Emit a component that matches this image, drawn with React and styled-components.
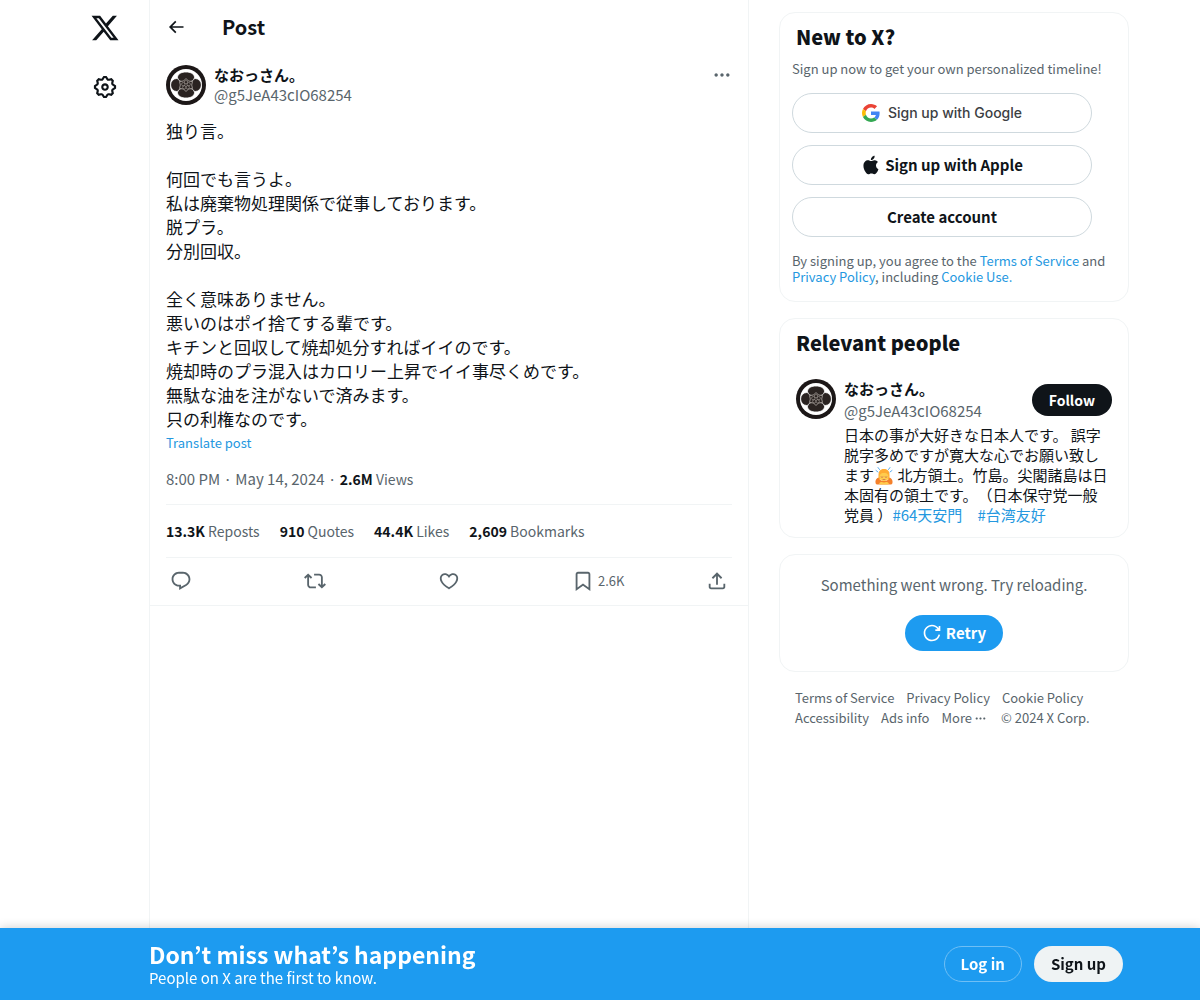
import React from "react";
import styled, { createGlobalStyle } from "styled-components";

const GlobalStyle = createGlobalStyle`
  :root {
    --text: #0f1419;
    --muted: #59656c;
    --line: #f1f4f5;
    --line-dark: #cfd9de;
    --blue: #1d9bf0;
    --link: #2498df;
  }

  *,
  *::before,
  *::after {
    box-sizing: border-box;
  }

  body {
    margin: 0;
    background-color: #fff;
    color: var(--text);
    font-family: "Noto Sans CJK JP", "Liberation Sans", sans-serif;
    font-size: 15px;
    line-height: 20px;
  }

  h1, h2, p, ul {
    margin: 0;
    padding: 0;
  }

  ul {
    list-style: none;
  }

  a {
    color: inherit;
    text-decoration: none;
  }

  button {
    padding: 0;
    border: 0;
    background: none;
    color: inherit;
    font: inherit;
    cursor: pointer;
  }
`;

const Page = styled.div`
  display: flex;
  max-width: 1078px;
  min-height: 100vh;
  margin-inline: auto;
`;

const SideNav = styled.nav`
  display: flex;
  flex-direction: column;
  align-items: center;
  gap: 31px;
  flex: 0 0 88px;
  padding-top: 13px;
`;

const NavLink = styled.a`
  display: flex;
  color: var(--text);
`;

const Column = styled.main`
  flex: 1 1 600px;
  max-width: 600px;
  border-inline: 1px solid var(--line);
`;

const TopBar = styled.header`
  display: flex;
  align-items: center;
  gap: 36px;
  height: 53px;
  padding-inline: 16px;

  & h1 {
    font-size: 20px;
    line-height: 24px;
  }
`;

const IconButton = styled.button`
  display: flex;
  align-items: center;
  gap: 4px;
  color: ${({ $color }) => $color || "var(--muted)"};
  font-size: 13px;
`;

const Post = styled.article`
  padding: 12px 16px 0;
  border-bottom: 1px solid var(--line);
`;

const PostHead = styled.div`
  display: flex;
  align-items: flex-start;
  gap: 8px;
`;

const Names = styled.div`
  display: flex;
  flex-direction: column;
  gap: ${({ $gap }) => $gap || "0"};
  flex: 1;
  min-width: 0;

  & .name {
    font-weight: 700;
  }
  & .handle {
    color: var(--muted);
  }
`;

const PostText = styled.p`
  margin-top: 14px;
  font-size: 17px;
  line-height: 24px;
  white-space: pre-line;
`;

const Translate = styled.button`
  display: block;
  color: var(--link);
  font-size: 13px;
  line-height: 24px;
`;

const Meta = styled.p`
  padding-block: 14px 15px;
  color: var(--muted);

  & span {
    font-size: 14px;
  }
  & b {
    color: var(--text);
  }
`;

const Stats = styled.ul`
  display: flex;
  flex-wrap: wrap;
  gap: 20px;
  padding-block: 16px;
  border-block: 1px solid var(--line);
  color: var(--muted);
  font-size: 14px;

  & b {
    color: var(--text);
  }
`;

const Actions = styled.div`
  display: flex;
  align-items: center;
  height: 47px;
  padding: 0 4px 2px;

  & button:not(:last-child) {
    flex: 1;
  }
`;

const Sidebar = styled.aside`
  display: flex;
  flex-direction: column;
  gap: 16px;
  flex: 0 0 350px;
  margin-left: 30px;
  padding-block: 12px 96px;
`;

const Card = styled.section`
  padding: ${({ $pad }) => $pad || "12px"};
  border: 1px solid var(--line);
  border-radius: 16px;

  & h2 {
    font-size: 20px;
    font-weight: 800;
    line-height: 24px;
  }
`;

const SignUpTitle = styled.h2`
  padding-inline: 4px;
`;

const Small = styled.p`
  margin-top: ${({ $top }) => $top};
  color: var(--muted);
  font-size: 13px;
  line-height: 16px;

  & a {
    color: var(--link);
  }
`;

const SignUpOptions = styled.div`
  display: flex;
  flex-direction: column;
  gap: 12px;
  max-width: 300px;
  margin-top: 16px;
`;

const PillButton = styled.button`
  display: flex;
  align-items: center;
  justify-content: center;
  gap: 4px;
  height: ${({ $height }) => $height || "36px"};
  padding-inline: 16px;
  border: 1px solid ${({ $border }) => $border || "transparent"};
  border-radius: 20px;
  background-color: ${({ $bg }) => $bg || "transparent"};
  color: ${({ $color }) => $color || "var(--text)"};
  font-size: ${({ $size }) => $size || "15px"};
  font-weight: 700;
`;

const GoogleButton = styled(PillButton)`
  gap: 8px;
  color: #3c4043;
  font-family: Inter, "Liberation Sans", sans-serif;
  font-size: 14px;
  font-weight: 500;
`;

const Person = styled.div`
  display: flex;
  gap: 8px;
  margin-top: 24px;
`;

const PersonBody = styled.div`
  flex: 1;
  min-width: 0;
`;

const PersonHead = styled.div`
  display: flex;
  align-items: center;
  justify-content: space-between;
`;

const Bio = styled.p`
  margin-top: 4px;
  text-spacing-trim: space-all;

  & a {
    color: var(--link);
  }
  & svg {
    margin-inline: 1px;
    vertical-align: -4px;
  }
`;

const ErrorCard = styled(Card)`
  display: flex;
  flex-direction: column;
  align-items: center;
  gap: 20px;
  color: var(--muted);
`;

const FooterLinks = styled.nav`
  display: flex;
  flex-wrap: wrap;
  column-gap: 12px;
  padding-inline: 16px;
  color: var(--muted);
  font-size: 13px;

  & button {
    display: flex;
    align-items: center;
    gap: 2px;
    padding-right: 2px;
  }
`;

const BottomBar = styled.div`
  position: fixed;
  inset: auto 0 0;
  background-color: var(--blue);
  color: #fff;
  box-shadow: 0 0 10px rgba(0, 0, 0, 0.2);
`;

const BottomInner = styled.div`
  display: flex;
  align-items: center;
  gap: 12px;
  max-width: 1078px;
  height: 72px;
  margin-inline: auto;
  padding-inline: 88px 16px;
`;

const Pitch = styled.div`
  flex: 1;

  & h2 {
    font-size: 23px;
    line-height: 28px;
  }
`;

const paths = {
  logo: "M18.244 2.25h3.308l-7.227 8.26 8.502 11.24H16.17l-5.214-6.817L4.99 21.75H1.68l7.73-8.835L1.254 2.25H8.08l4.713 6.231zm-1.161 17.52h1.833L7.084 4.126H5.117z",
  gear: "M10.54 1.75h2.92l1.57 2.36c.11.17.32.25.53.21l2.53-.59 2.17 2.17-.58 2.54c-.05.2.04.41.21.53l2.36 1.57v2.92l-2.36 1.57c-.17.12-.26.33-.21.53l.58 2.54-2.17 2.17-2.53-.59c-.21-.04-.42.04-.53.21l-1.57 2.36h-2.92l-1.58-2.36c-.11-.17-.32-.25-.52-.21l-2.54.59-2.17-2.17.58-2.54c.05-.2-.03-.41-.21-.53l-2.35-1.57v-2.92L4.1 8.97c.18-.12.26-.33.21-.53L3.73 5.9 5.9 3.73l2.54.59c.2.04.41-.04.52-.21l1.58-2.36zm1.07 2l-.98 1.47C10.05 6.08 9 6.5 7.99 6.27l-1.46-.34-.6.6.33 1.46c.24 1.01-.18 2.07-1.05 2.64l-1.46.98v.78l1.46.98c.87.57 1.29 1.63 1.05 2.64l-.33 1.46.6.6 1.46-.34c1.01-.23 2.06.19 2.64 1.05l.98 1.47h.78l.97-1.47c.58-.86 1.63-1.28 2.65-1.05l1.45.34.61-.6-.34-1.46c-.23-1.01.18-2.07 1.05-2.64l1.47-.98v-.78l-1.47-.98c-.87-.57-1.28-1.63-1.05-2.64l.34-1.46-.61-.6-1.45.34c-1.02.23-2.07-.19-2.65-1.05l-.97-1.47h-.78zM12 10.5c-.83 0-1.5.67-1.5 1.5s.67 1.5 1.5 1.5c.82 0 1.5-.67 1.5-1.5s-.68-1.5-1.5-1.5zM8.5 12c0-1.93 1.56-3.5 3.5-3.5 1.93 0 3.5 1.57 3.5 3.5s-1.57 3.5-3.5 3.5c-1.94 0-3.5-1.57-3.5-3.5z",
  back: "M7.414 13l5.043 5.04-1.414 1.42L3.586 12l7.457-7.46 1.414 1.42L7.414 11H21v2H7.414z",
  more: "M3 12c0-1.1.9-2 2-2s2 .9 2 2-.9 2-2 2-2-.9-2-2zm9 2c1.1 0 2-.9 2-2s-.9-2-2-2-2 .9-2 2 .9 2 2 2zm7 0c1.1 0 2-.9 2-2s-.9-2-2-2-2 .9-2 2 .9 2 2 2z",
  reply:
    "M1.751 10c0-4.42 3.584-8 8.005-8h4.366c4.49 0 8.129 3.64 8.129 8.13 0 2.96-1.607 5.68-4.196 7.11l-8.054 4.46v-3.69h-.067c-4.49.1-8.183-3.51-8.183-8.01zm8.005-6c-3.317 0-6.005 2.69-6.005 6 0 3.37 2.77 6.08 6.138 6.01l.351-.01h1.761v2.3l5.087-2.81c1.951-1.08 3.163-3.13 3.163-5.36 0-3.39-2.744-6.13-6.129-6.13H9.756z",
  repost:
    "M4.5 3.88l4.432 4.14-1.364 1.46L5.5 7.55V16c0 1.1.896 2 2 2H13v2H7.5c-2.209 0-4-1.79-4-4V7.55L1.432 9.48.068 8.02 4.5 3.88zM16.5 6H11V4h5.5c2.209 0 4 1.79 4 4v8.45l2.068-1.93 1.364 1.46-4.432 4.14-4.432-4.14 1.364-1.46 2.068 1.93V8c0-1.1-.896-2-2-2z",
  like: "M16.697 5.5c-1.222-.06-2.679.51-3.89 2.16l-.805 1.09-.806-1.09C9.984 6.01 8.526 5.44 7.304 5.5c-1.243.07-2.349.78-2.91 1.91-.552 1.12-.633 2.78.479 4.82 1.074 1.97 3.257 4.27 7.129 6.61 3.87-2.34 6.052-4.64 7.126-6.61 1.111-2.04 1.03-3.7.477-4.82-.561-1.13-1.666-1.84-2.908-1.91zm4.187 7.69c-1.351 2.48-4.001 5.12-8.379 7.67l-.503.3-.504-.3c-4.379-2.55-7.029-5.19-8.382-7.67-1.36-2.5-1.41-4.86-.514-6.67.887-1.79 2.647-2.91 4.601-3.01 1.651-.09 3.368.56 4.798 2.01 1.429-1.45 3.146-2.1 4.796-2.01 1.954.1 3.714 1.22 4.601 3.01.896 1.81.846 4.17-.514 6.67z",
  bookmark:
    "M4 4.5C4 3.12 5.119 2 6.5 2h11C18.881 2 20 3.12 20 4.5v18.44l-8-5.71-8 5.71V4.5zM6.5 4c-.276 0-.5.22-.5.5v14.56l6-4.29 6 4.29V4.5c0-.28-.224-.5-.5-.5h-11z",
  share:
    "M12 2.59l5.7 5.7-1.41 1.42L13 6.41V16h-2V6.41l-3.3 3.3-1.41-1.42L12 2.59zM21 15l-.02 3.51c0 1.38-1.12 2.49-2.5 2.49H5.5C4.11 21 3 19.88 3 18.5V15h2v3.5c0 .28.22.5.5.5h12.98c.28 0 .5-.22.5-.5L19 15h2z",
  apple:
    "M16.365 1.43c0 1.14-.493 2.27-1.177 3.08-.744.9-1.99 1.57-2.987 1.57-.12 0-.23-.02-.3-.03-.01-.06-.04-.22-.04-.39 0-1.15.572-2.27 1.206-2.98.804-.94 2.142-1.64 3.248-1.68.03.13.05.28.05.43zm4.565 15.71c-.03.07-.463 1.58-1.518 3.12-.945 1.34-1.94 2.71-3.43 2.71-1.517 0-1.9-.88-3.63-.88-1.698 0-2.302.91-3.67.91-1.377 0-2.332-1.26-3.428-2.8-1.287-1.82-2.323-4.63-2.323-7.28 0-4.28 2.797-6.55 5.552-6.55 1.448 0 2.675.95 3.6.95.865 0 2.222-1.01 3.902-1.01.613 0 2.886.06 4.374 2.19-.13.09-2.383 1.37-2.383 4.19 0 3.26 2.854 4.42 2.955 4.45z",
  retry:
    "M12 4c-4.418 0-8 3.58-8 8s3.582 8 8 8c3.806 0 6.993-2.66 7.802-6.22l1.95.44C20.742 18.67 16.76 22 12 22 6.477 22 2 17.52 2 12S6.477 2 12 2c3.272 0 6.176 1.57 8 4V3.5h2v6h-6v-2h2.616C17.175 5.39 14.749 4 12 4z",
};

const Icon = ({ name, size = 20 }) => (
  <svg width={size} height={size} viewBox="0 0 24 24" fill="currentColor" aria-hidden="true">
    <path d={paths[name]} />
  </svg>
);

const GoogleLogo = () => (
  <svg width="18" height="18" viewBox="0 0 48 48" aria-hidden="true">
    <path
      fill="#EA4335"
      d="M24 9.5c3.54 0 6.71 1.22 9.21 3.6l6.85-6.85C35.9 2.38 30.47 0 24 0 14.62 0 6.51 5.38 2.56 13.22l7.98 6.19C12.43 13.72 17.74 9.5 24 9.5z"
    />
    <path
      fill="#4285F4"
      d="M46.98 24.55c0-1.57-.15-3.09-.38-4.55H24v9.02h12.94c-.58 2.96-2.26 5.48-4.78 7.18l7.73 6c4.51-4.18 7.09-10.36 7.09-17.65z"
    />
    <path
      fill="#FBBC05"
      d="M10.53 28.59c-.48-1.45-.76-2.99-.76-4.59s.27-3.14.76-4.59l-7.98-6.19C.92 16.46 0 20.12 0 24c0 3.88.92 7.54 2.56 10.78l7.97-6.19z"
    />
    <path
      fill="#34A853"
      d="M24 48c6.48 0 11.93-2.13 15.89-5.81l-7.73-6c-2.15 1.45-4.92 2.3-8.16 2.3-6.26 0-11.57-4.22-13.47-9.91l-7.98 6.19C6.51 42.62 14.62 48 24 48z"
    />
  </svg>
);

const Avatar = () => (
  <svg width="40" height="40" viewBox="0 0 40 40" role="img" aria-label="なおっさん。">
    <circle cx="20" cy="20" r="20" fill="#1c1717" />
    <circle cx="20" cy="20" r="16" fill="#fff" />
    <g fill="#2a2321" stroke="#fff" strokeWidth=".8">
      <ellipse cx="10.800" cy="20" rx="6.200" ry="6.500" />
      <ellipse cx="29.200" cy="20" rx="6.200" ry="6.500" />
      <path d="M11.500 12.500C11.500 8.500 16 7 20 7s8.500 1.500 8.500 5.500c0 3-4 4-5 5h-7c-1-1-5-2-5-5z" />
      <path d="M11.500 27.500c0 4 4.500 5.500 8.500 5.500s8.500-1.500 8.500-5.500c0-3-4-4-5-5h-7c-1 1-5 2-5 5z" />
    </g>
    <path
      d="M20 13.500l2.500 2.500 4 .5-.8 3.500.8 3.500-4 .5-2.500 2.500-2.500-2.500-4-.5.8-3.500-.8-3.500 4-.5z"
      fill="#2a2321"
      stroke="#b5aea9"
      strokeWidth=".8"
    />
    <g fill="none" stroke="#a49c97" strokeWidth=".6">
      <circle cx="20" cy="17.200" r="1.700" />
      <circle cx="22.700" cy="19.200" r="1.700" />
      <circle cx="21.700" cy="22.300" r="1.700" />
      <circle cx="18.300" cy="22.300" r="1.700" />
      <circle cx="17.300" cy="19.200" r="1.700" />
    </g>
  </svg>
);

const BowEmoji = () => (
  <svg width="18" height="18" viewBox="0 0 36 36" role="img" aria-label="🙇">
    <path fill="#FFAC33" d="M18 4C10 4 7 9 7 16v9h22v-9c0-7-3-12-11-12z" />
    <ellipse cx="18" cy="19" rx="9" ry="9" fill="#FFCC4D" />
    <path fill="#FFAC33" d="M9 18c1-5 5-6 9-6s8 1 9 6c1-8-3-13-9-13S8 10 9 18z" />
    <path
      fill="#F4802B"
      d="M7 21c-4 1-7 6-6 10 0 3 2 4 4 4h26c2 0 4-1 4-4 1-4-2-9-6-10-1 4-5 7-11 7S8 25 7 21z"
    />
    <path fill="#FFCC4D" d="M8 33c1-3 6-4 10-2 4-2 9-1 10 2l-3 2H11z" />
    <path
      fill="none"
      stroke="#C1694F"
      strokeWidth="1.500"
      strokeLinecap="round"
      d="M12 20q2 2 4 0M20 20q2 2 4 0M16 25h4"
    />
    <path
      stroke="#5DADEC"
      strokeWidth="2"
      strokeLinecap="round"
      d="M2 7l4 3M6 1l3 4M34 7l-4 3M30 1l-3 4"
    />
  </svg>
);

const postText = `独り言。

何回でも言うよ。
私は廃棄物処理関係で従事しております。
脱プラ。
分別回収。

全く意味ありません。
悪いのはポイ捨てする輩です。
キチンと回収して焼却処分すればイイのです。
焼却時のプラ混入はカロリー上昇でイイ事尽くめです。
無駄な油を注がないで済みます。
只の利権なのです。`;

const stats = [
  ["13.3K", "Reposts"],
  ["910", "Quotes"],
  ["44.4K", "Likes"],
  ["2,609", "Bookmarks"],
];

const UserNames = ({ gap }) => (
  <Names $gap={gap}>
    <a className="name" href="/g5JeA43cIO68254">
      なおっさん。
    </a>
    <a className="handle" href="/g5JeA43cIO68254">
      @g5JeA43cIO68254
    </a>
  </Names>
);

const App = () => {
  return (
    <>
      <GlobalStyle />
      <Page>
        <SideNav>
          <NavLink href="/" aria-label="X">
            <Icon name="logo" size={30} />
          </NavLink>
          <NavLink href="/settings" aria-label="Settings">
            <Icon name="gear" size={26} />
          </NavLink>
        </SideNav>

        <Column>
          <TopBar>
            <IconButton $color="var(--text)" aria-label="Back">
              <Icon name="back" />
            </IconButton>
            <h1>Post</h1>
          </TopBar>
          <Post>
            <PostHead>
              <Avatar />
              <UserNames />
              <IconButton aria-label="More">
                <Icon name="more" />
              </IconButton>
            </PostHead>
            <PostText>{postText}</PostText>
            <Translate>Translate post</Translate>
            <Meta>
              8:00 PM · May 14, 2024 ·{" "}
              <span>
                <b>2.6M</b> Views
              </span>
            </Meta>
            <Stats>
              {stats.map(([count, label]) => (
                <li key={label}>
                  <b>{count}</b> {label}
                </li>
              ))}
            </Stats>
            <Actions>
              <IconButton aria-label="Reply">
                <Icon name="reply" size={22} />
              </IconButton>
              <IconButton aria-label="Repost">
                <Icon name="repost" size={22} />
              </IconButton>
              <IconButton aria-label="Like">
                <Icon name="like" size={22} />
              </IconButton>
              <IconButton aria-label="Bookmark">
                <Icon name="bookmark" size={22} />
                2.6K
              </IconButton>
              <IconButton aria-label="Share">
                <Icon name="share" size={22} />
              </IconButton>
            </Actions>
          </Post>
        </Column>

        <Sidebar>
          <Card $pad="12px 12px 16px">
            <SignUpTitle>New to X?</SignUpTitle>
            <Small $top="12px">Sign up now to get your own personalized timeline!</Small>
            <SignUpOptions>
              <GoogleButton $height="40px" $border="var(--line-dark)">
                <GoogleLogo />
                Sign up with Google
              </GoogleButton>
              <PillButton $height="40px" $border="var(--line-dark)">
                <Icon name="apple" />
                Sign up with Apple
              </PillButton>
              <PillButton $height="40px" $border="var(--line-dark)">
                Create account
              </PillButton>
            </SignUpOptions>
            <Small $top="16px">
              By signing up, you agree to the <a href="/tos">Terms of Service</a> and{" "}
              <a href="/privacy">Privacy Policy</a>, including <a href="/cookies">Cookie Use.</a>
            </Small>
          </Card>

          <Card $pad="12px 16px">
            <h2>Relevant people</h2>
            <Person>
              <Avatar />
              <PersonBody>
                <PersonHead>
                  <UserNames gap="2px" />
                  <PillButton $height="32px" $bg="var(--text)" $color="#fff" $size="14px">
                    Follow
                  </PillButton>
                </PersonHead>
                <Bio>
                  日本の事が大好きな日本人です。 誤字脱字多めですが寛大な心でお願い致します
                  <BowEmoji /> 北方領土。竹島。尖閣諸島は日本固有の領土です。（日本保守党一般党員 ）
                  <a href="/hashtag/64天安門">#64天安門</a>　<a href="/hashtag/台湾友好">#台湾友好</a>
                </Bio>
              </PersonBody>
            </Person>
          </Card>

          <ErrorCard $pad="20px">
            <p>Something went wrong. Try reloading.</p>
            <PillButton $bg="var(--blue)" $color="#fff">
              <Icon name="retry" />
              Retry
            </PillButton>
          </ErrorCard>

          <FooterLinks>
            <a href="/tos">Terms of Service</a>
            <a href="/privacy">Privacy Policy</a>
            <a href="/cookies">Cookie Policy</a>
            <a href="/accessibility">Accessibility</a>
            <a href="/ads">Ads info</a>
            <button>
              More <Icon name="more" size={13} />
            </button>
            <span>© 2024 X Corp.</span>
          </FooterLinks>
        </Sidebar>
      </Page>

      <BottomBar>
        <BottomInner>
          <Pitch>
            <h2>Don’t miss what’s happening</h2>
            <p>People on X are the first to know.</p>
          </Pitch>
          <PillButton $border="#6fbff5" $color="#fff">
            Log in
          </PillButton>
          <PillButton $bg="#eff3f4">Sign up</PillButton>
        </BottomInner>
      </BottomBar>
    </>
  );
};

export default App;
